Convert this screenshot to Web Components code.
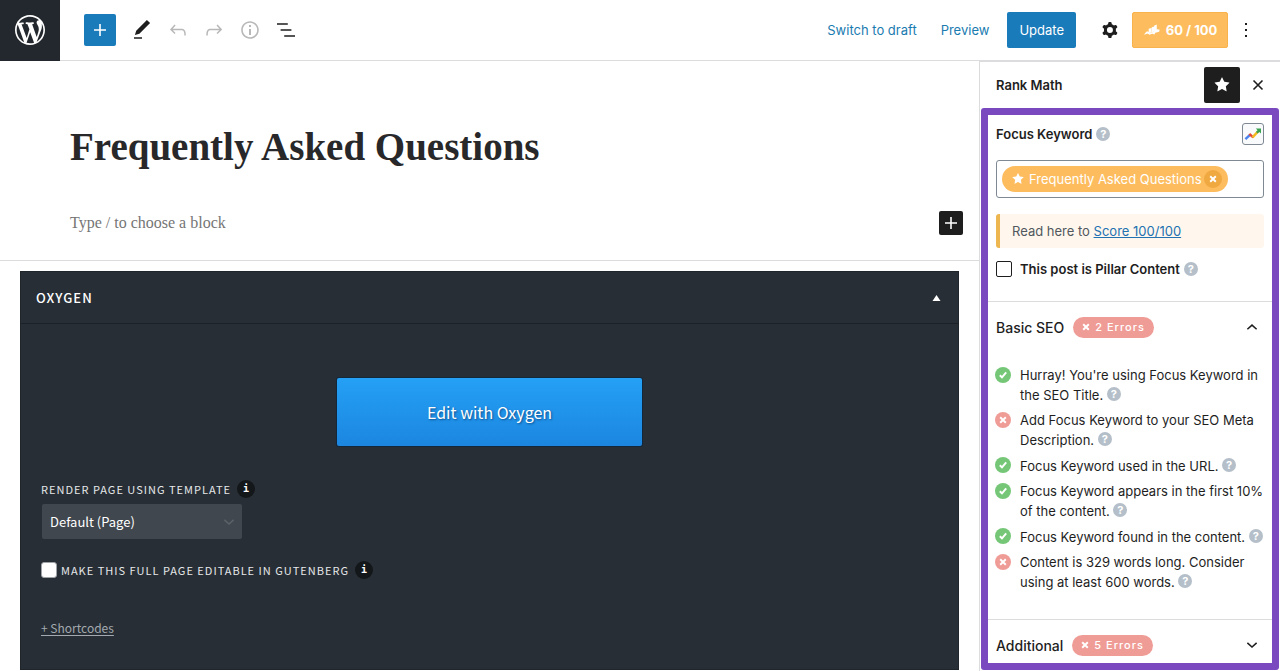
<!DOCTYPE html>
<html lang="en">
<head>
<meta charset="utf-8">
<title>Edit Page - Frequently Asked Questions</title>
<style>
  html, body { margin: 0; height: 100%; }
  body { font-family: Inter, "Liberation Sans", sans-serif; font-size: 13px; color: #1e1e1e; background: #fff; overflow: hidden; }
</style>
</head>
<body>
<editor-app></editor-app>

<script>
const ICONS = {
  wordpress: ['-2 -2 24 24', '<path d="M20 10c0-5.51-4.49-10-10-10C4.48 0 0 4.49 0 10c0 5.52 4.48 10 10 10 5.51 0 10-4.48 10-10zM7.78 15.37L4.37 6.22c.55-.02 1.17-.08 1.17-.08.5-.06.44-1.13-.06-1.11 0 0-1.45.11-2.37.11-.18 0-.37 0-.58-.01C4.12 2.69 6.87 1.11 10 1.11c2.33 0 4.45.87 6.05 2.34-.68-.11-1.65.39-1.65 1.58 0 .74.45 1.36.9 2.1.35.61.55 1.36.55 2.46 0 1.49-1.4 5-1.4 5l-3.03-8.37c.54-.02.82-.17.82-.17.5-.05.44-1.25-.06-1.22 0 0-1.44.12-2.38.12-.87 0-2.33-.12-2.33-.12-.5-.03-.56 1.2-.06 1.22l.92.08 1.26 3.41zM17.41 10c.24-.64.74-1.87.43-4.25.7 1.29 1.05 2.71 1.05 4.25 0 3.29-1.73 6.24-4.4 7.78.97-2.59 1.94-5.2 2.92-7.78zM6.1 18.09C3.12 16.65 1.11 13.53 1.11 10c0-1.3.23-2.48.72-3.59C3.25 10.3 4.67 14.2 6.1 18.09zm4.03-6.63l2.58 6.98c-.86.29-1.76.45-2.71.45-.79 0-1.57-.11-2.29-.33.81-2.38 1.62-4.74 2.42-7.1z"/>'],
  plus: ['0 0 24 24', '<path d="M18 11.2h-5.2V6h-1.6v5.2H6v1.6h5.2V18h1.6v-5.2H18z"/>'],
  edit: ['0 0 24 24', '<path d="M20.1 5.1L16.9 2 6.2 12.7l-1.3 4.4 4.5-1.3L20.1 5.1zM4 20.8h8v-1.5H4v1.5z"/>'],
  undo: ['0 0 24 24', '<path d="M18.3 11.7c-.6-.6-1.4-.9-2.3-.9H6.7l2.9-3.3-1.1-1-4.5 5L8.5 16l1-1-2.7-2.7H16c.5 0 .9.2 1.3.5 1 1 1 3.4 1 4.5v.3h1.5v-.2c0-1.5 0-4.3-1.5-5.7z"/>'],
  redo: ['0 0 24 24', '<path d="M15.6 6.5l-1.1 1 2.9 3.3H8c-.9 0-1.7.3-2.3.9-1.4 1.5-1.4 4.2-1.4 5.6v.2h1.5v-.3c0-1.1 0-3.5 1-4.5.3-.3.7-.5 1.3-.5h9.2L14.5 15l1.1 1.1 4.6-4.6-4.6-5z"/>'],
  info: ['0 0 24 24', '<path d="M12 3.2c-4.8 0-8.8 3.9-8.8 8.8 0 4.8 3.9 8.8 8.8 8.8 4.8 0 8.8-3.9 8.8-8.8 0-4.8-4-8.8-8.8-8.8zm0 16c-4 0-7.2-3.3-7.2-7.2C4.8 8 8 4.8 12 4.8s7.2 3.3 7.2 7.2c0 4-3.2 7.2-7.2 7.2zM11 17h2v-6h-2v6zm0-8h2V7h-2v2z"/>'],
  list: ['0 0 24 24', '<path d="M13.8 5.2H3v1.5h10.8V5.2zm-3.6 12v1.5H21v-1.5H10.2zm7.2-6H6.6v1.5h10.8v-1.5z"/>'],
  cog: ['0 0 24 24', '<path fill-rule="evenodd" d="M10.289 4.836A1 1 0 0111.275 4h1.306a1 1 0 01.987.836l.244 1.466c.787.26 1.503.679 2.108 1.218l1.393-.522a1 1 0 011.216.437l.653 1.13a1 1 0 01-.23 1.273l-1.148.944a6.025 6.025 0 010 2.435l1.149.946a1 1 0 01.23 1.272l-.653 1.13a1 1 0 01-1.216.437l-1.394-.522c-.605.54-1.32.958-2.108 1.218l-.244 1.466a1 1 0 01-.987.836h-1.306a1 1 0 01-.986-.836l-.244-1.466a5.995 5.995 0 01-2.108-1.218l-1.394.522a1 1 0 01-1.217-.436l-.653-1.131a1 1 0 01.23-1.272l1.149-.946a6.026 6.026 0 010-2.435l-1.148-.944a1 1 0 01-.23-1.272l.653-1.131a1 1 0 011.217-.437l1.393.522a5.994 5.994 0 012.108-1.218l.244-1.466zM14.929 12a3 3 0 11-6 0 3 3 0 016 0z"/>'],
  more: ['0 0 24 24', '<path d="M13 19h-2v-2h2v2zm0-6h-2v-2h2v2zm0-6h-2V5h2v2z"/>'],
  star: ['0 0 24 24', '<path d="M11.776 4.454a.25.25 0 01.448 0l2.069 4.192a.25.25 0 00.188.137l4.626.672a.25.25 0 01.139.426l-3.348 3.263a.25.25 0 00-.072.222l.79 4.607a.25.25 0 01-.362.263l-4.138-2.175a.25.25 0 00-.232 0l-4.138 2.175a.25.25 0 01-.363-.263l.79-4.607a.25.25 0 00-.071-.222L4.754 9.881a.25.25 0 01.139-.426l4.626-.672a.25.25 0 00.188-.137l2.069-4.192z"/>'],
  close: ['0 0 24 24', '<path fill="none" stroke="currentColor" stroke-width="3.2" d="M3 3l18 18M21 3L3 21"/>'],
  cross: ['0 0 10 10', '<path fill="none" stroke="currentColor" stroke-width="2.4" d="M1.5 1.5l7 7M8.500 1.500l-7 7"/>'],
  tick: ['0 0 10 10', '<path fill="none" stroke="currentColor" stroke-width="2.4" d="M1 5.400l2.700 2.500L9 1.600"/>'],
  up: ['0 0 14 14', '<path fill="none" stroke="currentColor" stroke-width="1.800" d="M1.600 9.600L7 4.800l5.400 4.800"/>'],
  down: ['0 0 14 14', '<path fill="none" stroke="currentColor" stroke-width="1.800" d="M1.600 4.600L7 9.400l5.400-4.800"/>'],
  triangle: ['0 0 8 6', '<path d="M4 0l4 6H0z"/>'],
  rank: ['0 0 18 12', '<path d="M9.200 3.200l2.600-1v5.500l-2.600 1zM11.700 1.500L14.600.3v6.900l-2.900.8zM14.500 5.400l2-.5v1.900l-2 .5zM6 4.800l2.900-.9v4.700L6 9z"/><path d="M.4 11.100c1.800-.9 2.300-2.700 4-3.700l2.400 1.100c1.500.7 3.200-.2 4.600-.9l6.300-2.100-.6 2.300-4.100 1.200-.9 1.800-2.300-.9-3 1.100-2-1.300c-1.600.9-3 1.300-4.400 1z"/>'],
  trend: ['0 0 18 14', '<g fill="none" stroke-width="2.400"><path stroke="#4b82ee" d="M1.400 12.200l4.600-4.400"/><path stroke="#e2483a" d="M5.300 6.800l3.900 3.600"/><path stroke="#f5b921" d="M8.500 10.400l5.600-6"/></g><path fill="#3ba350" d="M11.800 1.400H17v5.200l-1.700-1.700-1.600 1.700-1.700-1.700 1.500-1.700z"/>']
};

function define(name, css, html) {
  const template = document.createElement('template');
  customElements.define(name, class extends HTMLElement {
    constructor() {
      super();
      template.innerHTML = `<style>*{box-sizing:border-box}button{font:inherit;color:inherit;border:0;padding:0;margin:0;background:none}${css}</style>` +
        (typeof html === 'function' ? html(this) : html);
      this.attachShadow({ mode: 'open' }).append(template.content.cloneNode(true));
    }
  });
}

define('ui-icon', ':host{display:inline-flex;flex:none;width:24px;height:24px}svg{width:100%;height:100%;fill:currentColor}', el => {
  const [box, body] = ICONS[el.getAttribute('name')];
  return `<svg viewBox="${box}" aria-hidden="true">${body}</svg>`;
});

define('help-tip', `
  :host{display:inline-flex;width:14px;height:14px;border-radius:7px;background:#b5bfc9;color:#fff;
    align-items:center;justify-content:center;font-size:11px;line-height:14px;font-weight:700;vertical-align:2px}`,
  '<span>?</span>');

define('info-tip', `
  :host{display:inline-flex;width:18px;height:18px;border-radius:9px;background:#13171a;color:#fff;
    align-items:center;justify-content:center;font:700 10px/18px "DejaVu Sans Mono","Liberation Mono",monospace;letter-spacing:0}`,
  '<span>i</span>');

define('error-badge', `
  :host{display:inline-flex;align-items:center;gap:5px;height:21px;padding:0 9px;border-radius:11px;background:#f09c96;color:#fff;
    font-size:11px;font-weight:500;letter-spacing:1px;line-height:21px}
  ui-icon{width:8px;height:8px}`,
  '<ui-icon name="cross"></ui-icon><span><slot></slot></span>');

define('editor-header', `
  :host{display:flex;align-items:center;justify-content:space-between;height:61px;border-bottom:1px solid #dcdcde;padding-right:22px}
  .group{display:flex;align-items:center}
  .logo{display:flex;align-items:center;justify-content:center;width:60px;height:61px;background:#23282e;color:#fff}
  .logo ui-icon{width:36px;height:36px}
  .tools{gap:12px;margin-left:24px}
  .tools button{display:flex}
  .tools .add{width:32px;height:32px;align-items:center;justify-content:center;background:#197bba;color:#fff;border-radius:2px;margin-right:2px}
  button:disabled{color:#b8b8b8}
  a{color:#197bb0;text-decoration:none}
  .links{gap:24px;margin-right:18px}
  .update{height:36px;padding:0 12px;border-radius:2px;background:#197bba;color:#fff}
  .cog{display:flex;margin:0 10px 0 22px}
  .score{display:flex;align-items:center;gap:6px;width:96px;height:36px;justify-content:center;border:1px solid #f8b34c;border-radius:2px;background:#fdbc5e;color:#fff;font-weight:700}
  .score ui-icon{width:17px;height:12px}
  .more{display:flex;margin-left:6px}
  `, `
  <div class="group">
    <a class="logo" href="#" aria-label="WordPress"><ui-icon name="wordpress"></ui-icon></a>
    <div class="group tools">
      <button class="add" aria-label="Add block"><ui-icon name="plus"></ui-icon></button>
      <button aria-label="Edit"><ui-icon name="edit"></ui-icon></button>
      <button aria-label="Undo" disabled><ui-icon name="undo"></ui-icon></button>
      <button aria-label="Redo" disabled><ui-icon name="redo"></ui-icon></button>
      <button aria-label="Details" disabled><ui-icon name="info"></ui-icon></button>
      <button aria-label="List view"><ui-icon name="list"></ui-icon></button>
    </div>
  </div>
  <div class="group">
    <div class="group links"><a href="#">Switch to draft</a><a href="#">Preview</a></div>
    <button class="update">Update</button>
    <button class="cog" aria-label="Settings"><ui-icon name="cog"></ui-icon></button>
    <button class="score"><ui-icon name="rank"></ui-icon><span>60 / 100</span></button>
    <button class="more" aria-label="Options"><ui-icon name="more"></ui-icon></button>
  </div>`);

define('post-canvas', `
  :host{display:block;padding:60px 16px 25px 70px;border-bottom:1px solid #dcdcde;font-family:"Liberation Serif",serif}
  h1{margin:0;font-size:39px;line-height:52px;color:#28282a}
  .row{display:flex;align-items:center;justify-content:space-between;margin-top:38px}
  p{margin:0;font-size:16px;line-height:24px;color:#757575}
  button{display:flex;align-items:center;justify-content:center;width:24px;height:24px;border-radius:2px;background:#1e1e1e;color:#fff}
  `, `
  <h1>Frequently Asked Questions</h1>
  <div class="row"><p>Type / to choose a block</p><button aria-label="Add block"><ui-icon name="plus"></ui-icon></button></div>`);

define('oxygen-box', `
  :host{display:block;margin:10px 20px 1px;background:#272e35;border:1px solid #1e252b;color:#fff;font-family:"Noto Sans CJK SC","Noto Sans",sans-serif}
  header{display:flex;align-items:center;justify-content:space-between;height:52px;padding:0 17px 0 15px;border-bottom:1px solid #1b2127}
  h2{margin:0;font-size:13px;font-weight:500;letter-spacing:1px}
  header button{display:flex}
  header ui-icon{width:9px;height:6px}
  .body{display:flex;flex-direction:column;align-items:flex-start;padding:54px 20px 0}
  .edit{align-self:center;width:305px;height:68px;border-radius:2px;background:linear-gradient(#24a0f5,#1c86e0);box-shadow:0 0 0 1px #14283c;font-size:16px;text-shadow:1px 1px 2px #0d4f8c}
  .caption{display:flex;align-items:center;gap:6px;font-size:11px;line-height:18px;letter-spacing:1px;color:#e6e8ea}
  .template{margin-top:34px}
  select{appearance:none;width:200px;height:35px;margin:0;padding:0 8px;border:0;border-radius:2px;background:#41474e;color:#fff;font:13px/20px "Noto Sans CJK SC","Noto Sans",sans-serif}
  .select{display:grid;align-items:center;margin:6px 1px 0}
  .select>*{grid-area:1/1}
  .select ui-icon{justify-self:end;width:12px;height:12px;margin-right:7px;color:#5c6268}
  .full{margin-top:22px}
  .full label{display:flex;align-items:center;gap:4px}
  input{appearance:none;width:16px;height:16px;margin:0;border:1px solid #9ea3a8;border-radius:3px;background:#fff}
  a{margin-top:40px;font-size:12px;line-height:18px;color:#a3a9af;text-underline-offset:2px}
  `, `
  <header><h2>OXYGEN</h2><button aria-label="Toggle panel"><ui-icon name="triangle"></ui-icon></button></header>
  <div class="body">
    <button class="edit">Edit with Oxygen</button>
    <div class="caption template"><label for="tpl">RENDER PAGE USING TEMPLATE</label><info-tip></info-tip></div>
    <div class="select"><select id="tpl"><option>Default (Page)</option></select><ui-icon name="down"></ui-icon></div>
    <div class="caption full"><label><input type="checkbox">MAKE THIS FULL PAGE EDITABLE IN GUTENBERG</label><info-tip></info-tip></div>
    <a href="#">+ Shortcodes</a>
  </div>`);

define('check-item', `
  :host{display:flex;gap:9px;min-height:21px;line-height:20px}
  .mark{display:flex;flex:none;align-items:center;justify-content:center;width:16px;height:16px;margin-top:2px;border-radius:8px;background:#75c777;color:#fff}
  :host([bad]) .mark{background:#f09c96}
  .mark ui-icon{width:8px;height:8px}
  .text{align-self:flex-end}
  `, el => `<span class="mark"><ui-icon name="${el.hasAttribute('bad') ? 'cross' : 'tick'}"></ui-icon></span><span class="text"><slot></slot> <help-tip></help-tip></span>`);

define('focus-keyword', `
  :host{display:block;padding:8px 8px 22px;border-bottom:1px solid #dcdcde}
  .head{display:flex;align-items:center;justify-content:space-between;height:22px}
  .title{display:flex;gap:4px;align-items:center;font-weight:600}
  .trend{display:flex;align-items:center;justify-content:center;width:22px;height:22px;border:1px solid #7e8993;border-radius:3px;background:#f9fafb}
  .trend ui-icon{width:18px;height:14px}
  .field{display:flex;align-items:center;gap:4px;height:38px;margin-top:15px;padding:0 5px;border:1px solid #7e8993;border-radius:3px}
  .tag{display:flex;flex:none;align-items:center;height:26px;padding:0 6px 0 7px;border-radius:13px;background:#fdbc5e;color:#fff}
  .tag>ui-icon{width:18px;height:18px;margin-right:2px}
  .tag button{display:flex;align-items:center;justify-content:center;width:18px;height:18px;margin-left:2px;border-radius:9px;background:#f0a840}
  .tag button ui-icon{width:8px;height:8px}
  input[type=text]{flex:1;min-width:0;border:0;outline:0;padding:0;font:inherit}
  .note{margin:16px 0 0;padding:7px 12px;border-left:4px solid #edb64f;border-radius:3px;background:#fff7ed;color:#50575e;line-height:20px}
  a{color:#2271b1}
  .pillar{display:flex;align-items:center;gap:4px;margin-top:11px;line-height:20px;font-weight:600}
  .pillar label{display:flex;gap:8px;align-items:center}
  input[type=checkbox]{appearance:none;width:16px;height:16px;margin:0;border:1px solid #1e1e1e;border-radius:2px}
  `, `
  <div class="head"><label class="title" for="kw">Focus Keyword <help-tip></help-tip></label><button class="trend" aria-label="Trends"><ui-icon name="trend"></ui-icon></button></div>
  <div class="field"><span class="tag"><ui-icon name="star"></ui-icon><span>Frequently Asked Questions</span><button aria-label="Remove"><ui-icon name="cross"></ui-icon></button></span><input type="text" id="kw"></div>
  <p class="note">Read here to <a href="#">Score 100/100</a></p>
  <div class="pillar"><label><input type="checkbox">This post is Pillar Content</label><help-tip></help-tip></div>`);

define('seo-section', `
  :host{display:block}
  button{display:flex;align-items:center;width:100%;height:50px;padding:0 14px 0 8px;font-size:14px;font-weight:500}
  error-badge{margin-left:9px}
  ui-icon{width:12px;height:12px;margin-left:auto}
  `, el => `<button><span>${el.getAttribute('heading')}</span><error-badge>${el.getAttribute('errors')} Errors</error-badge><ui-icon name="${el.hasAttribute('open') ? 'up' : 'down'}"></ui-icon></button><slot></slot>`);

define('rank-sidebar', `
  :host{display:flex;flex-direction:column;width:301px;flex:none;border-left:1px solid #dcdcde;border-top:1px solid #dcdcde;padding:0 1px 1px}
  header{display:flex;align-items:center;height:46px;flex:none;padding:0 15px}
  h2{margin:0;font-size:13px;font-weight:600;flex:1}
  .pin{display:flex;align-items:center;justify-content:center;width:36px;height:36px;border-radius:2px;background:#1e1e1e;color:#fff}
  .close{display:flex;margin:0 0 0 12px}
  .close ui-icon{width:12px;height:12px}
  .panel{flex:1;border:7px solid #7a49c0;border-radius:3px;overflow:hidden}
  .checks{display:flex;flex-direction:column;gap:5px;padding:13px 4px 27px 7px;border-bottom:1px solid #dcdcde}
  `, `
  <header><h2>Rank Math</h2><button class="pin" aria-label="Pin"><ui-icon name="star"></ui-icon></button><button class="close" aria-label="Close"><ui-icon name="close"></ui-icon></button></header>
  <div class="panel">
    <focus-keyword></focus-keyword>
    <seo-section heading="Basic SEO" errors="2" open>
      <div class="checks">
        <check-item>Hurray! You're using Focus Keyword in the SEO Title.</check-item>
        <check-item bad>Add Focus Keyword to your SEO Meta Description.</check-item>
        <check-item>Focus Keyword used in the URL.</check-item>
        <check-item>Focus Keyword appears in the first 10% of the content.</check-item>
        <check-item>Focus Keyword found in the content.</check-item>
        <check-item bad>Content is 329 words long. Consider using at least 600 words.</check-item>
      </div>
    </seo-section>
    <seo-section heading="Additional" errors="5"></seo-section>
  </div>`);

define('editor-app', `
  :host{display:flex;flex-direction:column;height:100vh}
  editor-header{flex:none}
  .main{display:flex;flex:1;min-height:0}
  main{display:flex;flex-direction:column;flex:1;min-width:0}
  oxygen-box{flex:1}
  `, `
  <editor-header></editor-header>
  <div class="main"><main><post-canvas></post-canvas><oxygen-box></oxygen-box></main><rank-sidebar></rank-sidebar></div>`);
</script>
</body>
</html>
